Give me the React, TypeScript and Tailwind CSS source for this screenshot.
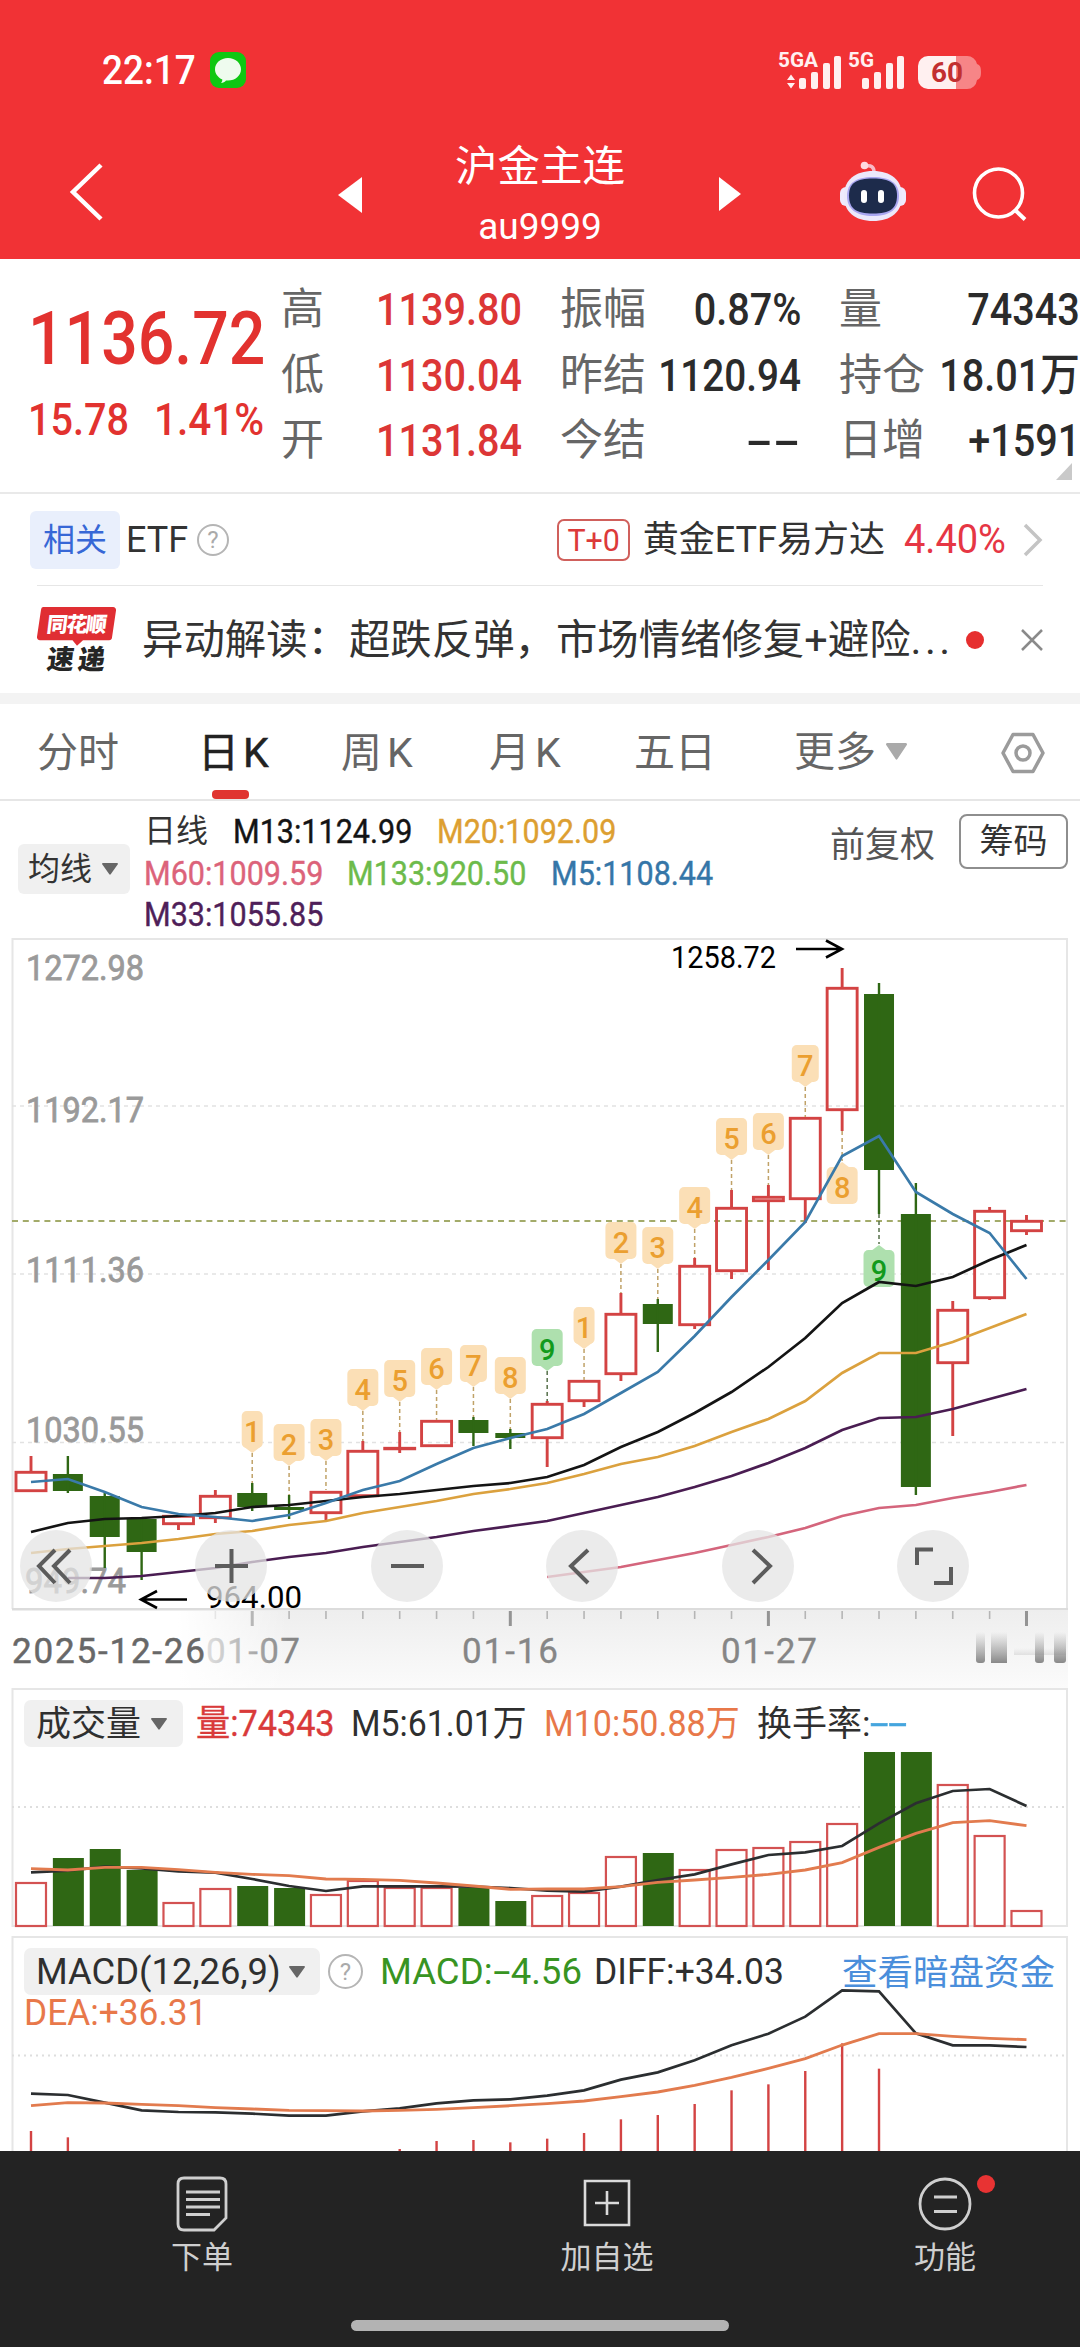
import type { ReactNode } from "react";
import clsx from "clsx";

type Candle = {
  up: boolean;
  high: number;
  top: number;
  bottom: number;
  low: number;
};

const STEP = 36.87;
const cx = (i: number) => 31 + i * STEP;

const candles: Candle[] = [
  { up: true, high: 1456, top: 1471, bottom: 1492, low: 1492 },
  { up: false, high: 1456, top: 1474, bottom: 1491, low: 1493 },
  { up: false, high: 1493, top: 1496, bottom: 1537, low: 1568 },
  { up: false, high: 1518, top: 1519, bottom: 1552, low: 1580 },
  { up: true, high: 1515, top: 1515, bottom: 1525, low: 1530 },
  { up: true, high: 1490, top: 1495, bottom: 1519, low: 1523 },
  { up: false, high: 1483, top: 1493, bottom: 1507, low: 1511 },
  { up: false, high: 1495, top: 1507, bottom: 1510, low: 1519 },
  { up: true, high: 1491, top: 1491, bottom: 1514, low: 1520 },
  { up: true, high: 1441, top: 1450, bottom: 1497, low: 1497 },
  { up: true, high: 1432, top: 1447, bottom: 1450, low: 1453 },
  { up: true, high: 1420, top: 1420, bottom: 1447, low: 1447 },
  { up: false, high: 1417, top: 1420, bottom: 1433, low: 1446 },
  { up: false, high: 1429, top: 1433, bottom: 1438, low: 1449 },
  { up: true, high: 1401, top: 1403, bottom: 1439, low: 1467 },
  { up: true, high: 1380, top: 1380, bottom: 1402, low: 1407 },
  { up: true, high: 1293, top: 1313, bottom: 1375, low: 1381 },
  { up: false, high: 1299, top: 1304, bottom: 1324, low: 1352 },
  { up: true, high: 1258, top: 1265, bottom: 1326, low: 1329 },
  { up: true, high: 1190, top: 1207, bottom: 1272, low: 1279 },
  { up: true, high: 1185, top: 1196, bottom: 1202, low: 1270 },
  { up: true, high: 1117, top: 1117, bottom: 1200, low: 1223 },
  { up: true, high: 968, top: 987, bottom: 1111, low: 1131 },
  { up: false, high: 983, top: 994, bottom: 1170, low: 1214 },
  { up: false, high: 1183, top: 1214, bottom: 1487, low: 1495 },
  { up: true, high: 1301, top: 1309, bottom: 1364, low: 1436 },
  { up: true, high: 1207, top: 1210, bottom: 1299, low: 1300 },
  { up: true, high: 1215, top: 1220, bottom: 1232, low: 1235 },
];

const averages = [
  {
    color: "#d4657c",
    from: 14,
    ys: [1577, 1572, 1567, 1560, 1553, 1545, 1537, 1528, 1516, 1508, 1505, 1498, 1492, 1485],
  },
  {
    color: "#4a1d52",
    from: 1,
    ys: [
      1578, 1578, 1576, 1572, 1568, 1562, 1557, 1553, 1547, 1542, 1537, 1531, 1526, 1521, 1513, 1505, 1497,
      1487, 1476, 1463, 1448, 1430, 1418, 1417, 1409, 1399, 1389,
    ],
  },
  {
    color: "#dba13e",
    from: 0,
    ys: [
      1553, 1549, 1546, 1543, 1539, 1534, 1531, 1525, 1521, 1513, 1507, 1501, 1494, 1489, 1483, 1474, 1464,
      1457, 1446, 1432, 1419, 1401, 1373, 1353, 1353, 1342, 1328, 1314,
    ],
  },
  {
    color: "#141414",
    from: 0,
    ys: [
      1532, 1523, 1519, 1518, 1516, 1513, 1507, 1505, 1501, 1497, 1494, 1490, 1486, 1483, 1477, 1465, 1447,
      1432, 1413, 1392, 1367, 1338, 1303, 1282, 1286, 1277, 1260, 1245,
    ],
  },
  {
    color: "#3a7aa9",
    from: 0,
    ys: [
      1482, 1479, 1492, 1507, 1514, 1517, 1521, 1515, 1503, 1490, 1481, 1464, 1448, 1438, 1429, 1414, 1393,
      1372, 1336, 1297, 1260, 1222, 1156, 1136, 1192, 1214, 1233, 1279,
    ],
  },
];

const badges = [
  { i: 6, n: "1", y: 1411, to: 1483 },
  { i: 7, n: "2", y: 1424, to: 1495 },
  { i: 8, n: "3", y: 1419, to: 1490 },
  { i: 9, n: "4", y: 1369, to: 1441 },
  { i: 10, n: "5", y: 1360, to: 1432 },
  { i: 11, n: "6", y: 1348, to: 1420 },
  { i: 12, n: "7", y: 1345, to: 1417 },
  { i: 13, n: "8", y: 1357, to: 1429 },
  { i: 14, n: "9", y: 1329, to: 1401, green: true },
  { i: 15, n: "1", y: 1307, to: 1380 },
  { i: 16, n: "2", y: 1222, to: 1293 },
  { i: 17, n: "3", y: 1227, to: 1299 },
  { i: 18, n: "4", y: 1187, to: 1258 },
  { i: 19, n: "5", y: 1118, to: 1190 },
  { i: 20, n: "6", y: 1113, to: 1185 },
  { i: 21, n: "7", y: 1045, to: 1117 },
  { i: 22, n: "8", y: 1167, to: 1131, below: true },
  { i: 23, n: "9", y: 1250, to: 1214, below: true, green: true },
];

const volumes = [
  1882, 1858, 1849, 1870, 1902, 1888, 1886, 1888, 1894, 1880, 1887, 1887, 1888, 1901, 1895, 1892, 1856, 1853,
  1869, 1849, 1847, 1841, 1823, 1752, 1752, 1784, 1835, 1910,
];
const volM5 = [
  577, 572, 560, 565, 574, 578, 597, 618, 633, 619, 619, 619, 620, 624, 632, 635, 620, 600, 583, 553, 525,
  517, 498, 430, 370, 333, 327, 378,
];
const volM10 = [
  566, 570, 562, 562, 569, 577, 583, 587, 597, 598, 601, 609, 618, 628, 627, 627, 620, 607, 600, 592, 583,
  570, 548, 502, 460, 428, 422, 437,
];
const diff = [
  491, 495, 518, 541, 546, 547, 551, 557, 557, 544, 535, 520, 511, 508, 497, 481, 449, 427, 391, 346, 311,
  260, 181, 184, 310, 346, 346, 351,
];
const dea = [
  527, 518, 519, 523, 527, 533, 537, 541, 542, 543, 541, 538, 533, 527, 521, 513, 500, 486, 466, 442, 415,
  386, 345, 311, 311, 319, 325, 329,
];
const macdBars: [number, number][] = [
  [0, 603], [1, 622], [10, 657], [11, 633], [12, 630], [13, 637], [14, 626], [15, 609], [16, 568], [17, 555],
  [18, 522], [19, 481], [20, 463], [21, 423], [22, 340], [23, 416],
];

const points = (ys: number[], from = 0) => ys.map((y, k) => `${cx(k + from)},${y}`).join(" ");

function Num({ children, className, right }: { children: ReactNode; className?: string; right?: boolean }) {
  return (
    <span
      className={clsx(
        "inline-block whitespace-nowrap",
        right ? "origin-right" : "origin-left",
        className?.includes("scale-x-") ? "" : "scale-x-90",
        className
      )}
    >
      {children}
    </span>
  );
}

function Caret({ className }: { className?: string }) {
  return (
    <svg viewBox="0 0 18 14" preserveAspectRatio="none" className={clsx("fill-current", className ?? "h-[12px] w-[16px] text-[#666]")}>
      <path d="M1 0h16a1 1 0 0 1 .8 1.6l-8 11.6a1 1 0 0 1-1.6 0L.2 1.6A1 1 0 0 1 1 0Z" />
    </svg>
  );
}

function Help({ className }: { className?: string }) {
  return (
    <span
      className={clsx(
        "flex items-center justify-center rounded-full border-2 border-[#b5b5b5] text-[24px] leading-none text-[#aaa]",
        className
      )}
    >
      ?
    </span>
  );
}

function StatusBar() {
  return (
    <div className="flex h-[140px] items-center pl-[102px] pr-[98px] text-white">
      <Num className="w-[102px] text-[41px] font-medium leading-[48px]">22:17</Num>
      <svg viewBox="0 0 36 36" className="ml-[6px] size-[36px]">
        <rect width="36" height="36" rx="9" fill="#0fc713" />
        <path
          d="M18 6c7.4 0 13 5 13 11.300s-5.600 11.300-13 11.300l-2-.1c-1 1.400-3 2.500-5 2.500 1-1 1.400-2.200 1.300-3.500C8 25.500 5 21.900 5 17.300 5 11 10.600 6 18 6Z"
          fill="#eefbee"
        />
      </svg>
      <svg viewBox="776 46 206 42" className="ml-auto h-[42px] w-[206px] fill-[#fff0f0]">
        <text x="778" y="64" fontSize="21" fontWeight="700" textLength="40" lengthAdjust="spacingAndGlyphs">5GA</text>
        <path d="M787 77l4-5.500 4 5.500zM787 80l4 5.500 4-5.500z" />
        <rect x="799" y="75" width="7" height="11" rx="2" />
        <rect x="811" y="69" width="7" height="17" rx="2" />
        <rect x="823" y="60" width="7" height="26" rx="2" />
        <rect x="834" y="53" width="7" height="33" rx="2" />
        <text x="848" y="64" fontSize="21" fontWeight="700" textLength="26" lengthAdjust="spacingAndGlyphs">5G</text>
        <rect x="862" y="75" width="7" height="11" rx="2" />
        <rect x="874" y="69" width="7" height="17" rx="2" />
        <rect x="886" y="60" width="7" height="26" rx="2" />
        <rect x="897" y="53" width="7" height="33" rx="2" />
        <path d="M956 53h11a10 10 0 0 1 10 8c3 1 4 3 4 8s-1 7-4 8a10 10 0 0 1-10 9h-11z" fill="#f78587" />
        <path d="M956 53h-28a10 10 0 0 0-10 10v13a10 10 0 0 0 10 10h28z" />
        <text x="931" y="79" fontSize="28" fontWeight="700" fill="#c22f30" textLength="32" lengthAdjust="spacingAndGlyphs">60</text>
      </svg>
    </div>
  );
}

function Robot() {
  return (
    <svg viewBox="838 160 70 64" className="h-[64px] w-[70px]">
      <path d="M866 166c5-1 8 1 8 6" fill="none" stroke="#f9b9c6" strokeWidth="3.500" />
      <circle cx="864.500" cy="165.500" r="3.800" fill="#ffd9e0" />
      <rect x="840" y="187" width="12" height="19" rx="6" fill="#efeafd" />
      <rect x="894" y="187" width="12" height="19" rx="6" fill="#efeafd" />
      <path d="M873 171c18 0 29 9 29 25s-11 25-29 25-29-9-29-25 11-25 29-25Z" fill="#ece8fb" />
      <path d="M873 177c17 0 26 6 26 19s-9 20-26 20-26-7-26-20 9-19 26-19Z" fill="#a9a6f0" />
      <path d="M873 178.500c17 0 24 5 24 17 0 13-7 18-24 18s-24-5-24-18c0-12 7-17 24-17Z" fill="#1d2b4b" />
      <rect x="861" y="190" width="6" height="13" rx="3" fill="#fff" />
      <rect x="878" y="190" width="6" height="13" rx="3" fill="#fff" />
    </svg>
  );
}

function NavBar() {
  return (
    <div className="flex h-[119px] items-start pl-[69px] pr-[50px] text-white">
      <svg viewBox="0 0 36 60" className="mt-[22px] h-[60px] w-[36px]">
        <path d="M32 3 4 30l28 27" fill="none" stroke="#fff" strokeWidth="4.500" />
      </svg>
      <svg viewBox="0 0 24 36" className="ml-[233px] mt-[37px] h-[36px] w-[24px]">
        <path d="M24 0v36L0 18z" fill="#fff" />
      </svg>
      <div className="ml-[91px] flex w-[174px] flex-col items-center">
        <div className="mt-[2px] text-[42.500px] leading-[50px]">沪金主连</div>
        <div className="mt-[13px] text-[37px] leading-[44px]">au9999</div>
      </div>
      <svg viewBox="0 0 22 34" className="ml-[92px] mt-[37px] h-[34px] w-[22px]">
        <path d="M0 0v34l22-17z" fill="#fff" />
      </svg>
      <div className="ml-[97px] mt-[20px]">
        <Robot />
      </div>
      <svg viewBox="970 164 58 60" className="ml-[62px] mt-[24px] h-[60px] w-[58px] shrink-0">
        <circle cx="998.500" cy="193" r="24" fill="none" stroke="#fff" strokeWidth="3.600" />
        <path d="m1015 210 10 9.500" stroke="#fff" strokeWidth="4" />
      </svg>
    </div>
  );
}

const quotes = [
  { red: true, rows: [["高", "1139.80"], ["低", "1130.04"], ["开", "1131.84"]] },
  { rows: [["振幅", "0.87%"], ["昨结", "1120.94"], ["今结", "--"]] },
  { rows: [["量", "74343"], ["持仓", "18.01万"], ["日增", "+1591"]] },
];

function Quote() {
  return (
    <section className="relative flex h-[235px] border-b-2 border-[#e9e9e9] pl-[28px]">
      <div className="w-[253px] pt-[40px] font-medium text-[#e2322f]">
        <Num className="scale-x-[.87] text-[74px] leading-[80px]">1136.72</Num>
        <div className="mt-[15px] flex text-[45px] leading-[52px]">
          <Num className="w-[126px] scale-x-[.88]">15.78</Num>
          <Num className="scale-x-[.9]">1.41%</Num>
        </div>
      </div>
      <div className="flex gap-[38px] pt-[18px]">
        {quotes.map((col, c) => (
          <div key={c} className="w-[241px]">
            {col.rows.map(([label, value]) => (
              <div key={label} className="flex h-[65.500px] justify-between leading-[65.500px]">
                <span className="w-[87px] shrink-0 whitespace-nowrap text-[43px] text-[#666]">{label}</span>
                <Num
                  right
                  className={clsx(
                    "text-[45px] font-medium",
                    col.red ? "text-[#dc3636]" : "text-[#2b2b2b]",
                    value === "--" && "scale-x-[1.8]",
                    value === "1120.94" && "-ml-[30px] scale-x-[.86]",
                    value !== "--" && value !== "1120.94" && "-ml-[30px] scale-x-[.88]"
                  )}
                >
                  {value}
                </Num>
              </div>
            ))}
          </div>
        ))}
      </div>
      <svg viewBox="0 0 16 17" className="absolute bottom-[12px] right-[8px] h-[17px] w-[16px]">
        <path d="M16 0v17H0z" fill="#c9c9c9" />
      </svg>
    </section>
  );
}

function RelatedEtf() {
  return (
    <div className="mx-[37px] flex h-[92px] items-center border-b border-[#e6e6e6] text-[36px] text-[#333]">
      <span className="-ml-[7px] flex h-[58px] w-[90px] items-center justify-center rounded-[6px] bg-[#e9effc] text-[32px] text-[#3767d6]">
        相关
      </span>
      <span className="ml-[6px] w-[63px]">ETF</span>
      <Help className="ml-[8px] size-[32px]" />
      <span className="ml-auto flex h-[42px] w-[73px] items-center justify-center rounded-[7px] border-2 border-[#d0605c] text-[32px] text-[#dc3a3a]">
        <span className="scale-x-95">T+0</span>
      </span>
      <span className="ml-[13px] whitespace-nowrap">黄金ETF易方达</span>
      <Num className="ml-[19px] w-[108px] scale-x-[.95] text-[40px] text-[#e63644]">4.40%</Num>
      <svg viewBox="0 0 20 34" className="ml-[11px] h-[34px] w-[20px]">
        <path d="m2 2 15 15L2 32" fill="none" stroke="#c4c4c4" strokeWidth="3.500" />
      </svg>
    </div>
  );
}

function NewsLogo() {
  return (
    <svg viewBox="36 604 82 70" className="h-[70px] w-[82px]">
      <path
        d="M43 606h70a3 3 0 0 1 3 3.500l-4 27a3 3 0 0 1-3 2.700H83l-6 5.500-4.500-5.500H40a3 3 0 0 1-3-3.500l4-27q.3-2.700 2-2.700Z"
        fill="#e02e33"
      />
      <text x="0" y="0" fontSize="21" fontWeight="900" fill="#fff" textLength="60" transform="translate(46 631) skewX(-7)">
        同花顺
      </text>
      <text x="0" y="0" fontSize="27" fontWeight="900" fill="#252525" textLength="58" transform="translate(46 668) skewX(-7)">
        速递
      </text>
    </svg>
  );
}

function NewsRow() {
  return (
    <div className="flex h-[107px] items-center pl-[36px] pr-[37px] text-[#333]">
      <NewsLogo />
      <span className="ml-[24px] flex-1 whitespace-nowrap text-[41.400px] leading-[60px]">
        异动解读：超跌反弹，市场情绪修复+避险
        <span className="tracking-[3.500px]">...</span>
      </span>
      <span className="size-[18px] rounded-full bg-[#e62e2e]" />
      <svg viewBox="0 0 22 22" className="ml-[37px] size-[22px]">
        <path d="m1 1 20 20M21 1 1 21" stroke="#8a8a8a" strokeWidth="2.500" />
      </svg>
    </div>
  );
}

function PeriodTabs() {
  return (
    <nav className="flex h-[97px] border-b-2 border-[#e6e6e6] pl-[37px] text-[41px] leading-[98px] text-[#666]">
      <span className="w-[161px]">分时</span>
      <span className="relative w-[143px] text-[#222] [-webkit-text-stroke:0.5px_#222]">
        日<span className="pl-[4px]">K</span>
        <i className="absolute bottom-0 left-[14px] h-[9px] w-[37px] rounded-[4px] bg-[#e03430]" />
      </span>
      <span className="w-[148px]">周<span className="pl-[5px]">K</span></span>
      <span className="w-[145px]">月<span className="pl-[5px]">K</span></span>
      <span className="w-[160px]">五日</span>
      <span className="flex items-center">
        更多
        <Caret className="ml-[10px] h-[17px] w-[21px] text-[#aaa]" />
      </span>
      <svg viewBox="0 0 44 42" className="ml-[94px] mt-[28px] h-[42px] w-[44px]">
        <path d="M12 2.500h20L42 21 32 39.500H12L2 21z" fill="none" stroke="#9b9b9b" strokeWidth="3.500" strokeLinejoin="round" />
        <circle cx="22" cy="21" r="7" fill="none" stroke="#9b9b9b" strokeWidth="3.500" />
      </svg>
    </nav>
  );
}

function AverageLegend() {
  return (
    <div className="flex h-[137px]">
      <div className="ml-[18px] mt-[43px] flex h-[50px] w-[112px] items-center rounded-[6px] bg-[#f0f0f0] pl-[10px] text-[32px] text-[#333]">
        <span className="mr-[10px]">均线</span>
        <Caret />
      </div>
      <div className="ml-[14px] mt-[10px] w-[640px] text-[33px] leading-[41.500px] [-webkit-text-stroke:0.4px_currentColor]">
        <div className="flex">
          <span className="w-[89px] text-[32px] text-[#333] [-webkit-text-stroke:0]">日线</span>
          <Num className="w-[204px] scale-x-[.925] text-[#141414]">M13:1124.99</Num>
          <Num className="scale-x-[.925] text-[#dd9f31]">M20:1092.09</Num>
        </div>
        <div className="flex">
          <Num className="w-[203px] scale-x-[.925] text-[#dc637a]">M60:1009.59</Num>
          <Num className="w-[204px] scale-x-[.925] text-[#6dbb4b]">M133:920.50</Num>
          <Num className="scale-x-[.925] text-[#3576a8]">M5:1108.44</Num>
        </div>
        <Num className="scale-x-[.925] text-[#4f1f59]">M33:1055.85</Num>
      </div>
      <span className="ml-[46px] mt-[20px] text-[35px] leading-[50px] text-[#555]">前复权</span>
      <span className="ml-[24px] mt-[13px] flex h-[55px] w-[109px] items-center justify-center rounded-[8px] border-2 border-[#8e8e8e] text-[34px] text-[#333]">
        筹码
      </span>
    </div>
  );
}

function Badge({ i, n, y, to, below, green }: { i: number; n: string; y: number; to: number; below?: boolean; green?: boolean }) {
  const w = n === "1" ? 21 : n === "7" ? 27 : 31;
  const x = cx(i);
  const fill = green ? "#aee0ae" : "#fbdfb6";
  return (
    <g>
      <path
        d={below ? `M${x} ${to}V${y - 6}` : `M${x} ${y + 42}V${to}`}
        stroke={green ? "#56704a" : "#c0a268"}
        strokeDasharray="4 3"
        strokeWidth="1.500"
      />
      <rect x={x - w / 2} y={y} width={w} height="37" rx="5" fill={fill} />
      <path d={below ? `M${x - 8} ${y + 1}l8-6 8 6z` : `M${x - 8} ${y + 36}l8 6 8-6z`} fill={fill} />
      <text x={x} y={y + 31} textAnchor="middle" fontSize="29" fontWeight="500" fill={green ? "#129a1c" : "#eb9f30"}>
        {n}
      </text>
    </g>
  );
}

const controls = [
  "M35 20 19 36l16 17M50 20 34 36l16 17",
  "M20 36h33M36.500 19v34",
  "M20 36h33",
  "M42 20 25 36l17 17",
  "M31 20l17 16-17 17",
  "M20 35V19.500h16M54 37v16H37",
];

function KLineChart() {
  return (
    <div className="relative h-[750px]">
      <svg viewBox="0 938 1080 750" className="block h-[750px] w-full">
        <defs>
          <linearGradient id="axis" x2="0" y2="1">
            <stop offset="0" stopColor="#eeeeee" />
            <stop offset="1" stopColor="#fbfbfb" />
          </linearGradient>
          <linearGradient id="fade">
            <stop offset=".6" stopColor="#fff" />
            <stop offset="1" stopColor="#fff" stopOpacity="0" />
          </linearGradient>
          <linearGradient id="ghost" x2="0" y2="1">
            <stop offset="0" stopColor="#999" stopOpacity="0" />
            <stop offset="1" stopColor="#888" />
          </linearGradient>
        </defs>
        <rect x="12" y="1610" width="1056" height="78" fill="url(#axis)" />
        <path d="M12.500 1609V939H1067V1609" fill="none" stroke="#e6e6e6" strokeWidth="2" />
        <path d="M12 1609H1068" stroke="#dcdcdc" strokeWidth="2" />
        <path d="M12 1106H1067M12 1274H1067M12 1442.500H1067" stroke="#e2e2e2" strokeWidth="1.500" strokeDasharray="4 4" />
        <path d="M12 1221H1067" stroke="#a3ab6a" strokeWidth="2" strokeDasharray="6 4.800" />
        <g fontSize="35.500" fill="#9a9a9a" stroke="#9a9a9a" strokeWidth=".8">
          <text x="26" y="980" textLength="118" lengthAdjust="spacingAndGlyphs">1272.98</text>
          <text x="26" y="1122" textLength="118" lengthAdjust="spacingAndGlyphs">1192.17</text>
          <text x="26" y="1282" textLength="118" lengthAdjust="spacingAndGlyphs">1111.36</text>
          <text x="26" y="1442" textLength="118" lengthAdjust="spacingAndGlyphs">1030.55</text>
          <text x="25" y="1593" textLength="101" lengthAdjust="spacingAndGlyphs">949.74</text>
        </g>
        {candles.map((c, i) =>
          c.up ? (
            <g key={i} stroke="#d34343" strokeWidth="2.900" fill="none">
              <path d={`M${cx(i)} ${c.high}V${c.top}M${cx(i)} ${c.bottom}V${c.low}`} />
              <rect x={cx(i) - 15} y={c.top + 1.3} width="30" height={Math.max(c.bottom - c.top - 2.6, 0.5)} />
            </g>
          ) : (
            <g key={i} fill="#2f6714">
              <rect x={cx(i) - 15} y={c.top} width="30" height={c.bottom - c.top} />
              <rect x={cx(i) - 1.2} y={c.high} width="2.400" height={c.low - c.high} />
            </g>
          )
        )}
        {badges.map((b) => (
          <Badge key={b.i} {...b} />
        ))}
        {averages.map((a) => (
          <polyline key={a.color} points={points(a.ys, a.from)} fill="none" stroke={a.color} strokeWidth="2.700" />
        ))}
        <g fontSize="31" fill="#000">
          <text x="671" y="968" textLength="105" lengthAdjust="spacingAndGlyphs">1258.72</text>
          <text x="206" y="1608" textLength="96" lengthAdjust="spacingAndGlyphs">964.00</text>
        </g>
        <path d="M796 949h45M826 940.500l16 8.500-16 8.500M187 1599.500h-45M157 1591l-16 8.500 16 8.500" fill="none" stroke="#000" strokeWidth="2.600" />
        {candles.map((_, i) => {
          if (i < 5) return null;
          const major = i % 7 === 6;
          return (
            <rect
              key={i}
              x={cx(i) - (major ? 1.5 : 0.8)}
              y="1611"
              width={major ? 3 : 1.6}
              height={major ? 15 : 8}
              fill={major ? "#949494" : "#b5b5b5"}
            />
          );
        })}
        <g fontSize="35" fill="#868686" stroke="#868686" strokeWidth=".3">
          <text x="206" y="1663" textLength="94">01-07</text>
          <text x="462" y="1663" textLength="96">01-16</text>
          <text x="721" y="1663" textLength="96">01-27</text>
        </g>
        <rect x="12" y="1611" width="276" height="77" fill="url(#fade)" />
        <text x="12" y="1663" fontSize="35" fill="#686868" stroke="#686868" strokeWidth=".5" textLength="193">
          2025-12-26
        </text>
        <g fill="url(#ghost)">
          <rect x="976" y="1632" width="9" height="31" rx="3" />
          <rect x="991" y="1632" width="16" height="31" />
          <rect x="1035" y="1632" width="9" height="31" rx="3" />
          <rect x="1054" y="1632" width="12" height="31" rx="3" />
          <rect x="1014" y="1648" width="52" height="7" opacity=".2" />
        </g>
      </svg>
      <div className="absolute left-[20px] top-[592px] flex w-[949px] justify-between">
        {controls.map((d) => (
          <span key={d} className="size-[72px] rounded-full bg-[#e4e4e4]/75">
            <svg viewBox="0 0 72 72" className="size-[72px]">
              <path d={d} fill="none" stroke="#5c5c5c" strokeWidth="4" />
            </svg>
          </span>
        ))}
      </div>
    </div>
  );
}

function VolumePanel() {
  return (
    <div className="relative h-[248px]">
      <svg viewBox="0 1688 1080 248" className="block h-[248px] w-full">
        <path d="M12.500 1926V1689H1067V1926Z" fill="none" stroke="#e6e6e6" strokeWidth="2" />
        <path d="M12 1807H1067" stroke="#dedede" strokeWidth="2" strokeDasharray="2 4" />
        {volumes.map((y, i) =>
          candles[i].up ? (
            <rect key={i} x={cx(i) - 15} y={y + 1} width="30" height={1925 - y} fill="none" stroke="#d35252" strokeWidth="2.200" />
          ) : (
            <rect key={i} x={cx(i) - 15} y={y} width="31" height={1926 - y} fill="#2f6714" />
          )
        )}
        <polyline points={points(volM5.map((v) => 1680 + v / 3))} fill="none" stroke="#2b2e30" strokeWidth="2.700" />
        <polyline points={points(volM10.map((v) => 1680 + v / 3))} fill="none" stroke="#e27b4e" strokeWidth="2.900" />
      </svg>
      <div className="absolute left-[24px] top-[12px] flex h-[47px] items-center text-[36px] leading-[49px] text-[#2f2f2f]">
        <span className="flex h-[47px] w-[159px] items-center rounded-[7px] bg-[#f0f0f0] pl-[12px] text-[35px]">
          <span className="mr-[10px] mt-[2px]">成交量</span>
          <Caret />
        </span>
        <div className="mt-[2px] flex pl-[13px]">
          <Num className="w-[155px] scale-x-[.95] text-[#d93a3a] [-webkit-text-stroke:0.4px_#d93a3a]">量:74343</Num>
          <Num className="w-[193px] scale-x-[.94]">M5:61.01万</Num>
          <Num className="w-[213px] scale-x-[.945] text-[#e8784a]">M10:50.88万</Num>
          <span className="text-[35px]">换手率:</span>
          <Num className="scale-x-[1.85] text-[#45a5de] [-webkit-text-stroke:0.5px_#45a5de]">--</Num>
        </div>
      </div>
    </div>
  );
}

function MacdPanel() {
  return (
    <div className="relative h-[215px]">
      <svg viewBox="0 1936 1080 215" className="block h-[215px] w-full">
        <path d="M12.500 2160V1937H1067V2160" fill="none" stroke="#e6e6e6" strokeWidth="2" />
        <path d="M12 2055.500H1067" stroke="#dedede" strokeWidth="2" strokeDasharray="2 4" />
        {macdBars.map(([i, z]) => (
          <rect key={i} x={cx(i) - 1.2} y={1930 + z / 3} width="2.400" height="240" fill="#d34343" />
        ))}
        <polyline points={points(diff.map((v) => 1930 + v / 3))} fill="none" stroke="#2b2e30" strokeWidth="2.700" />
        <polyline points={points(dea.map((v) => 1930 + v / 3))} fill="none" stroke="#e27b4e" strokeWidth="2.900" />
      </svg>
      <div className="absolute left-[24px] top-[12px] w-[1044px] text-[36px] leading-[49px] text-[#2f2f2f]">
        <div className="flex h-[47px] items-center">
          <span className="flex h-[47px] w-[296px] items-center rounded-[7px] bg-[#f0f0f0] pl-[12px]">
            <Num className="mt-[2px] w-[253px] scale-x-[1.01]">MACD(12,26,9)</Num>
            <Caret />
          </span>
          <Help className="ml-[8px] size-[35px]" />
          <Num className="ml-[17px] mt-[2px] w-[214px] scale-x-[1.015] text-[#389422]">
            MACD:<span className="mx-[4px] inline-block scale-x-[1.7]">-</span>4.56
          </Num>
          <Num className="mt-[2px] scale-x-[.985]">DIFF:+34.03</Num>
          <span className="ml-auto mr-[13px] mt-[4px] text-[35.500px] text-[#4a8edb]">查看暗盘资金</span>
        </div>
        <div className="leading-[36px] text-[#e8784a]">
          <Num className="scale-x-[.98]">DEA:+36.31</Num>
        </div>
      </div>
    </div>
  );
}

function BottomBar() {
  return (
    <footer className="relative h-[196px] bg-[#232323] text-[31px] leading-[40px] text-[#cfcfcf]">
      <div className="flex pl-[142px]">
        <div className="flex w-[120px] flex-col items-center">
          <svg viewBox="0 0 52 58" className="mt-[24px] h-[58px] w-[52px]" fill="none" stroke="#cfcfcf" strokeWidth="2.800">
            <path d="M8 3h36q6 0 6 6v34L38 55H8q-6 0-6-6V9q0-6 6-6Z" />
            <path d="M10 17h34M10 24.500h34M10 32h34M10 39.500h24" strokeWidth="3" />
          </svg>
          <span className="mt-[5px]">下单</span>
        </div>
        <div className="ml-[285px] flex w-[120px] flex-col items-center">
          <svg viewBox="0 0 48 48" className="mt-[28px] size-[48px]" fill="none" stroke="#dadada" strokeWidth="2.600">
            <path d="M2 2h44v44H2zM12 24h24M24 12v24" />
          </svg>
          <span className="mt-[11px]">加自选</span>
        </div>
        <div className="relative ml-[218px] flex w-[120px] flex-col items-center">
          <svg viewBox="0 0 54 54" className="mt-[26px] size-[54px]" fill="none" stroke="#cfcfcf" strokeWidth="2.800">
            <circle cx="27" cy="27" r="25" />
            <path d="M16 20h23M16 34.500h23" strokeWidth="3" />
          </svg>
          <span className="mt-[7px]">功能</span>
          <i className="absolute left-[92px] top-[24px] size-[18px] rounded-full bg-[#e83333]" />
        </div>
      </div>
      <div className="absolute bottom-[16px] left-[351px] h-[11px] w-[378px] rounded-full bg-[#b3b3b3]" />
    </footer>
  );
}

export default function App() {
  return (
    <div className="flex h-[2347px] w-[1080px] flex-col overflow-hidden bg-white font-[Roboto,'Noto_Sans_CJK_SC',sans-serif]">
      <header className="h-[259px] bg-[#f13235]">
        <StatusBar />
        <NavBar />
      </header>
      <Quote />
      <RelatedEtf />
      <NewsRow />
      <div className="h-[11px] bg-[#f3f3f3]" />
      <PeriodTabs />
      <AverageLegend />
      <KLineChart />
      <VolumePanel />
      <MacdPanel />
      <BottomBar />
    </div>
  );
}
